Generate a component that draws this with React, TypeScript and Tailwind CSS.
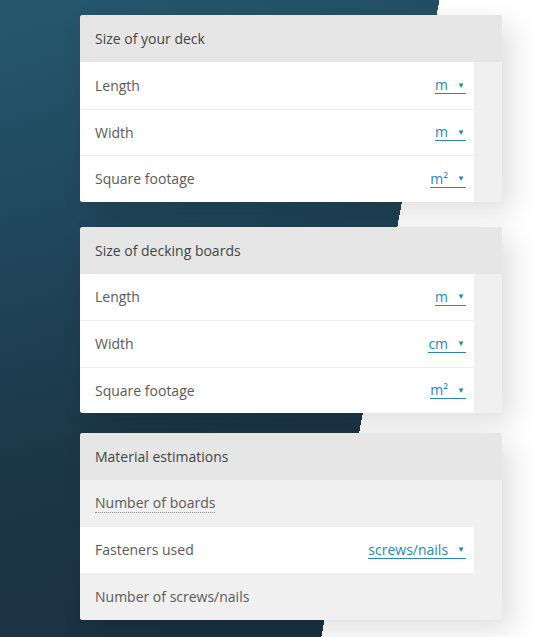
import React from 'react';

type Row = { label: string; unit?: string; white?: boolean; dotted?: boolean };

const deck: Row[] = [
  { label: 'Length', unit: 'm', white: true },
  { label: 'Width', unit: 'm', white: true },
  { label: 'Square footage', unit: 'm²', white: true },
];

const boards: Row[] = [
  { label: 'Length', unit: 'm', white: true },
  { label: 'Width', unit: 'cm', white: true },
  { label: 'Square footage', unit: 'm²', white: true },
];

const materials: Row[] = [
  { label: 'Number of boards', dotted: true },
  { label: 'Fasteners used', unit: 'screws/nails', white: true },
  { label: 'Number of screws/nails' },
];

function UnitSelect({ unit }: { unit: string }) {
  return (
    <span className="flex items-center border-b border-[#2a87ad] leading-[17px] text-[#2a87ad] cursor-pointer">
      <span>{unit}</span>
      <span className="ml-[9px] mr-[1px] text-[8px] leading-none">▼</span>
    </span>
  );
}

function Card({ title, rows, className }: { title: string; rows: Row[]; className?: string }) {
  return (
    <div className={`rounded-[3px] overflow-hidden bg-[#f0f0f0] shadow-[10px_10px_28px_rgba(0,0,0,0.13)] ${className ?? ''}`}>
      <div className="h-[47px] flex items-center px-[15px] bg-[#e6e6e6] text-[#444]">{title}</div>
      <div className="pr-[28px]">
        {rows.map((r, i) => (
          <div
            key={i}
            className={`h-[46.5px] flex items-center justify-between pl-[15px] pr-[8px] ${
              r.white ? 'bg-white' : 'bg-[#f0f0f0]'
            } ${r.white && i > 0 && rows[i - 1].white ? 'border-t border-[#efefef]' : ''}`}
          >
            <span className={r.dotted ? 'border-b border-dotted border-[#888] leading-[19px]' : ''}>{r.label}</span>
            {r.unit && <UnitSelect unit={r.unit} />}
          </div>
        ))}
      </div>
    </div>
  );
}

export default function App() {
  return (
    <div
      className="h-screen w-full overflow-hidden bg-[linear-gradient(100.5deg,transparent_432px,#ffffff_432px),linear-gradient(165deg,#25586f_0%,#214a60_25%,#1c3748_60%,#1a2f3d_100%)] text-[14px] text-[#5a5a5a]"
      style={{ fontFamily: '"Open Sans", "Noto Sans", Arial, sans-serif' }}
    >
      <div className="w-[422px] ml-[80px] pt-[15px] flex flex-col">
        <Card title="Size of your deck" rows={deck} />
        <Card title="Size of decking boards" rows={boards} className="mt-[25px]" />
        <Card title="Material estimations" rows={materials} className="mt-[20px]" />
      </div>
    </div>
  );
}
